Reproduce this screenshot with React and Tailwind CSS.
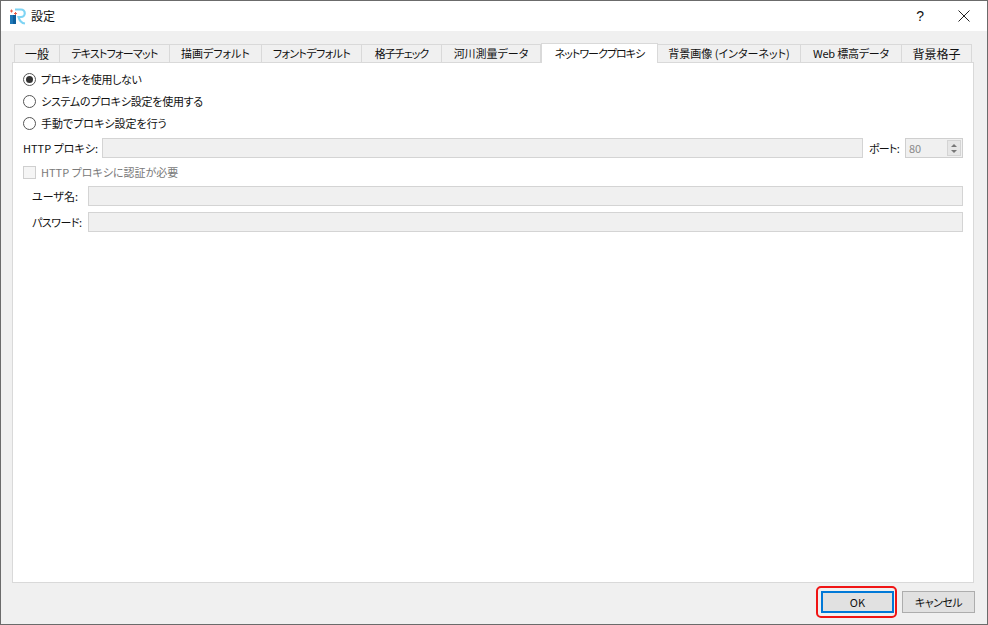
import React from "react";

const tabs = [
  { label: "一般", width: "w-[46px]", text: "text-[12px]" },
  { label: "テキストフォーマット", width: "w-[110px]", text: "text-[11px] tracking-[-0.8px]" },
  { label: "描画デフォルト", width: "w-[92px]", text: "text-[11px]" },
  { label: "フォントデフォルト", width: "w-[100px]", text: "text-[11px] tracking-[-0.6px]" },
  { label: "格子チェック", width: "w-[80px]", text: "text-[11px] tracking-[-1px]" },
  { label: "河川測量データ", width: "w-[99px]", text: "text-[11px]" },
  { label: "ネットワークプロキシ", width: "w-[117px]", text: "text-[11px] tracking-[-1px]", active: true },
  { label: "背景画像 (インターネット)", width: "w-[143px]", text: "text-[11px]" },
  { label: "Web 標高データ", width: "w-[101px]", text: "text-[11px] tracking-[-0.2px]" },
  { label: "背景格子", width: "w-[70px]", text: "text-[12px]" },
];

function Logo() {
  return (
    <svg width="17" height="17" viewBox="0 0 17 17" className="shrink-0">
      <rect x="1" y="7" width="5" height="9" fill="#1f78b8" />
      <rect x="4" y="7" width="3" height="9" fill="#0f5f9c" />
      <path d="M1 3h3M2.5 1.5v3M5 5.5h3M6.5 4v3" stroke="#e8604c" strokeWidth="1" fill="none" />
      <path d="M6 1.5h6a3.7 3.7 0 0 1 0 7.5h-2.5q1.5 6 6.5 6.5" fill="none" stroke="#7fd4f4" strokeWidth="2.2" />
    </svg>
  );
}

function Radio({ checked, label, text }) {
  return (
    <div className="flex items-center h-[22px]">
      <span className="w-[13px] h-[13px] ml-[10px] rounded-full border border-[#555] bg-white flex items-center justify-center">
        {checked && <span className="w-[7px] h-[7px] rounded-full bg-[#333]"></span>}
      </span>
      <span className={`ml-[5px] ${text}`}>{label}</span>
    </div>
  );
}

function Input({ className }) {
  return <div className={`h-[20px] bg-[#f0f0f0] border border-[#d4d4d4] ${className}`}></div>;
}

export default function App() {
  return (
    <div
      className="w-[988px] h-[625px] bg-[#f0f0f0] border border-[#6b6b6b] flex flex-col overflow-hidden text-[11px] leading-none text-[#111] [font-feature-settings:'palt']"
      style={{ fontFamily: '"Noto Sans CJK JP", "Liberation Sans", sans-serif' }}
    >
      <div className="h-[30px] shrink-0 bg-white flex items-center pl-[8px]">
        <Logo />
        <span className="ml-[5px] text-[12px]">設定</span>
        <span className="ml-auto mr-[34px] text-[14px]" style={{ fontFamily: '"Liberation Sans", sans-serif' }}>?</span>
        <svg width="12" height="12" viewBox="0 0 12 12" className="mr-[17px]">
          <path d="M.5.5l11 11M11.5.5l-11 11" stroke="#222" strokeWidth="1" fill="none" />
        </svg>
      </div>

      <div className="flex-1 flex flex-col px-[11px] pt-[11px] min-h-0">
        <div className="flex items-end h-[20px] pl-[2px] shrink-0 relative z-10">
          {tabs.map((t) =>
            t.active ? (
              <div
                key={t.label}
                className={`${t.width} ${t.text} h-[20px] bg-white border border-b-0 border-[#d9d9d9] -mb-px flex items-center justify-center whitespace-nowrap`}
              >
                {t.label}
              </div>
            ) : (
              <div
                key={t.label}
                className={`${t.width} ${t.text} h-[18px] bg-[#f0f0f0] border border-l-0 first:border-l border-b-0 border-[#d9d9d9] flex items-center justify-center whitespace-nowrap`}
              >
                {t.label}
              </div>
            )
          )}
        </div>

        <div className="h-[521px] w-[962px] shrink-0 bg-white border border-[#d9d9d9] pt-[5px]">
          <Radio checked label="プロキシを使用しない" text="tracking-[-0.35px]" />
          <Radio label="システムのプロキシ設定を使用する" text="tracking-[-0.25px]" />
          <Radio label="手動でプロキシ設定を行う" />

          <div className="flex items-center mt-[4px] h-[20px]">
            <span className="ml-[10px] w-[79px] whitespace-nowrap">HTTP プロキシ:</span>
            <Input className="w-[761px]" />
            <span className="ml-[6px] w-[36px] whitespace-nowrap tracking-[-0.75px]">ポート:</span>
            <div className="w-[58px] h-[20px] bg-[#f0f0f0] border border-[#cfcfcf] flex items-center justify-between pl-[3px] text-[#8a8a8a]">
              <span>80</span>
              <div className="w-[14px] h-[16px] mr-px bg-[#e6e6e6] border border-[#d4d4d4] flex flex-col items-center justify-center gap-[3px]">
                <span className="w-0 h-0 border-x-[3px] border-x-transparent border-b-[3px] border-b-[#777]"></span>
                <span className="w-0 h-0 border-x-[3px] border-x-transparent border-t-[3px] border-t-[#777]"></span>
              </div>
            </div>
          </div>

          <div className="flex items-center mt-[4px] h-[21px] text-[#7a7a7a]">
            <span className="ml-[10px] w-[13px] h-[13px] border border-[#cfcfcf] bg-[#f5f5f5]"></span>
            <span className="ml-[5px]">HTTP プロキシに認証が必要</span>
          </div>

          <div className="flex items-center mt-[3px] h-[20px]">
            <span className="ml-[19px] w-[56px] whitespace-nowrap">ユーザ名:</span>
            <Input className="w-[875px]" />
          </div>
          <div className="flex items-center mt-[6px] h-[20px]">
            <span className="ml-[19px] w-[56px] whitespace-nowrap tracking-[-0.5px]">パスワード:</span>
            <Input className="w-[875px]" />
          </div>
        </div>

        <div className="flex justify-end items-center gap-[8px] mt-[8px] pr-[1px]">
          <div className="relative">
            <button className="w-[73px] h-[22px] bg-[#e1e1e1] border-2 border-[#0078d7] flex items-center justify-center">
              OK
            </button>
            <span className="absolute -left-[5px] -right-[3px] -top-[5px] -bottom-[5px] border-2 border-[#f01414] rounded-[5px]"></span>
          </div>
          <button className="w-[73px] h-[22px] bg-[#e1e1e1] border border-[#adadad] flex items-center justify-center tracking-[-0.5px]">
            キャンセル
          </button>
        </div>
      </div>
    </div>
  );
}
